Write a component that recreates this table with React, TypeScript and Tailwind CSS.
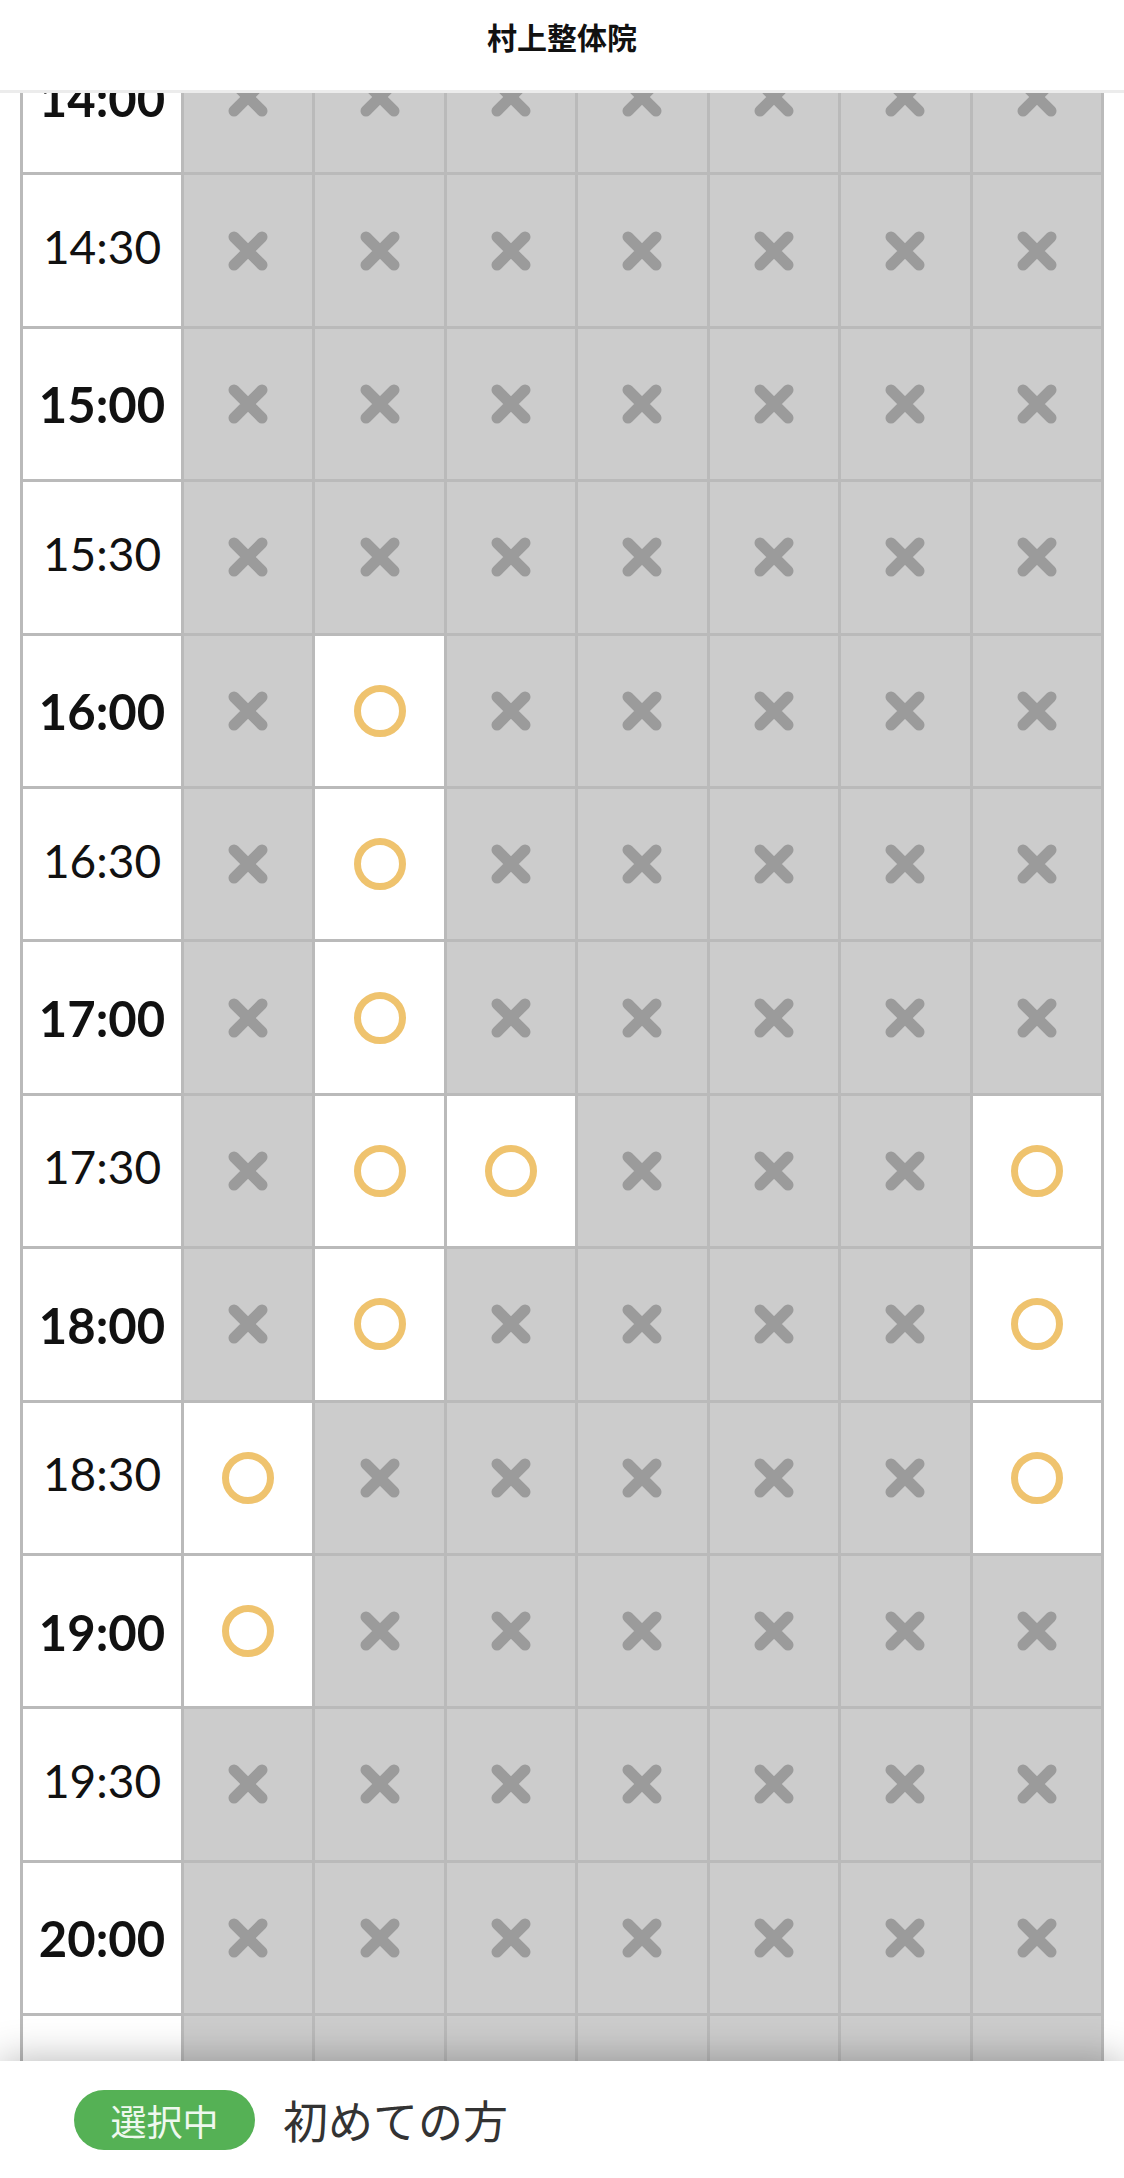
import { Fragment } from 'react';

interface Slot {
  time: string;
  open: number[];
}

// one row per half hour, "open" = column indexes with a free slot
const slots: Slot[] = [
  { time: '14:00', open: [] },
  { time: '14:30', open: [] },
  { time: '15:00', open: [] },
  { time: '15:30', open: [] },
  { time: '16:00', open: [1] },
  { time: '16:30', open: [1] },
  { time: '17:00', open: [1] },
  { time: '17:30', open: [1, 2, 6] },
  { time: '18:00', open: [1, 6] },
  { time: '18:30', open: [0, 6] },
  { time: '19:00', open: [0] },
  { time: '19:30', open: [] },
  { time: '20:00', open: [] },
  // last row sits under the bottom bar, label not visible
  { time: '', open: [] },
];

const days = [0, 1, 2, 3, 4, 5, 6];

function Cross() {
  return (
    <svg width="40" height="40" viewBox="0 0 40 40">
      <path d="M6 6L34 34M34 6L6 34" stroke="#9b9b9b" strokeWidth="11" strokeLinecap="round" />
    </svg>
  );
}

function Circle() {
  return (
    <svg width="52" height="52" viewBox="0 0 52 52">
      <circle cx="26" cy="26" r="22.5" fill="none" stroke="#efc36e" strokeWidth="7" />
    </svg>
  );
}

export default function App() {
  return (
    <div className="flex h-[2178px] w-full flex-col overflow-hidden bg-white font-['Noto_Sans_CJK_JP',sans-serif]">
      {/* Header */}
      <header className="h-[93px] shrink-0 border-b-[3px] border-[#ececec] pt-[21px] text-center">
        <h1 className="text-[30px] font-bold leading-none text-[#111]">村上整体院</h1>
      </header>

      {/* Timetable (scrolled) */}
      <main className="min-h-0 flex-1 overflow-hidden px-5">
        <div className="-mt-[74px] grid auto-rows-[150.4px] grid-cols-[158px_repeat(7,1fr)] gap-[3px] border-[3px] border-[#bababa] bg-[#bababa]">
          {slots.map((slot, i) => {
            const onHour = slot.time.endsWith(':00');
            return (
              <Fragment key={i}>
                <div
                  className={
                    'flex items-center justify-center bg-white font-[Lato,sans-serif] leading-none text-[#111] ' +
                    (onHour ? 'pt-[2px] text-[49px] font-bold' : 'pb-[7px] text-[46px] font-normal')
                  }
                >
                  {slot.time}
                </div>
                {days.map((d) => {
                  const isOpen = slot.open.includes(d);
                  return (
                    <div
                      key={d}
                      className={'flex items-center justify-center ' + (isOpen ? 'bg-white' : 'bg-[#cccccc]')}
                    >
                      {isOpen ? <Circle /> : <Cross />}
                    </div>
                  );
                })}
              </Fragment>
            );
          })}
        </div>
      </main>

      {/* Bottom bar */}
      <footer className="relative z-10 flex h-[117px] shrink-0 items-center gap-[28px] bg-white pl-[74px] shadow-[0_0_40px_rgba(0,0,0,0.3)]">
        <span className="flex h-[60px] w-[181px] items-center justify-center rounded-full bg-[#55b155] text-[36px] leading-none text-[#eef8ee]">
          選択中
        </span>
        <span className="text-[45px] leading-none text-[#333]">初めての方</span>
      </footer>
    </div>
  );
}
